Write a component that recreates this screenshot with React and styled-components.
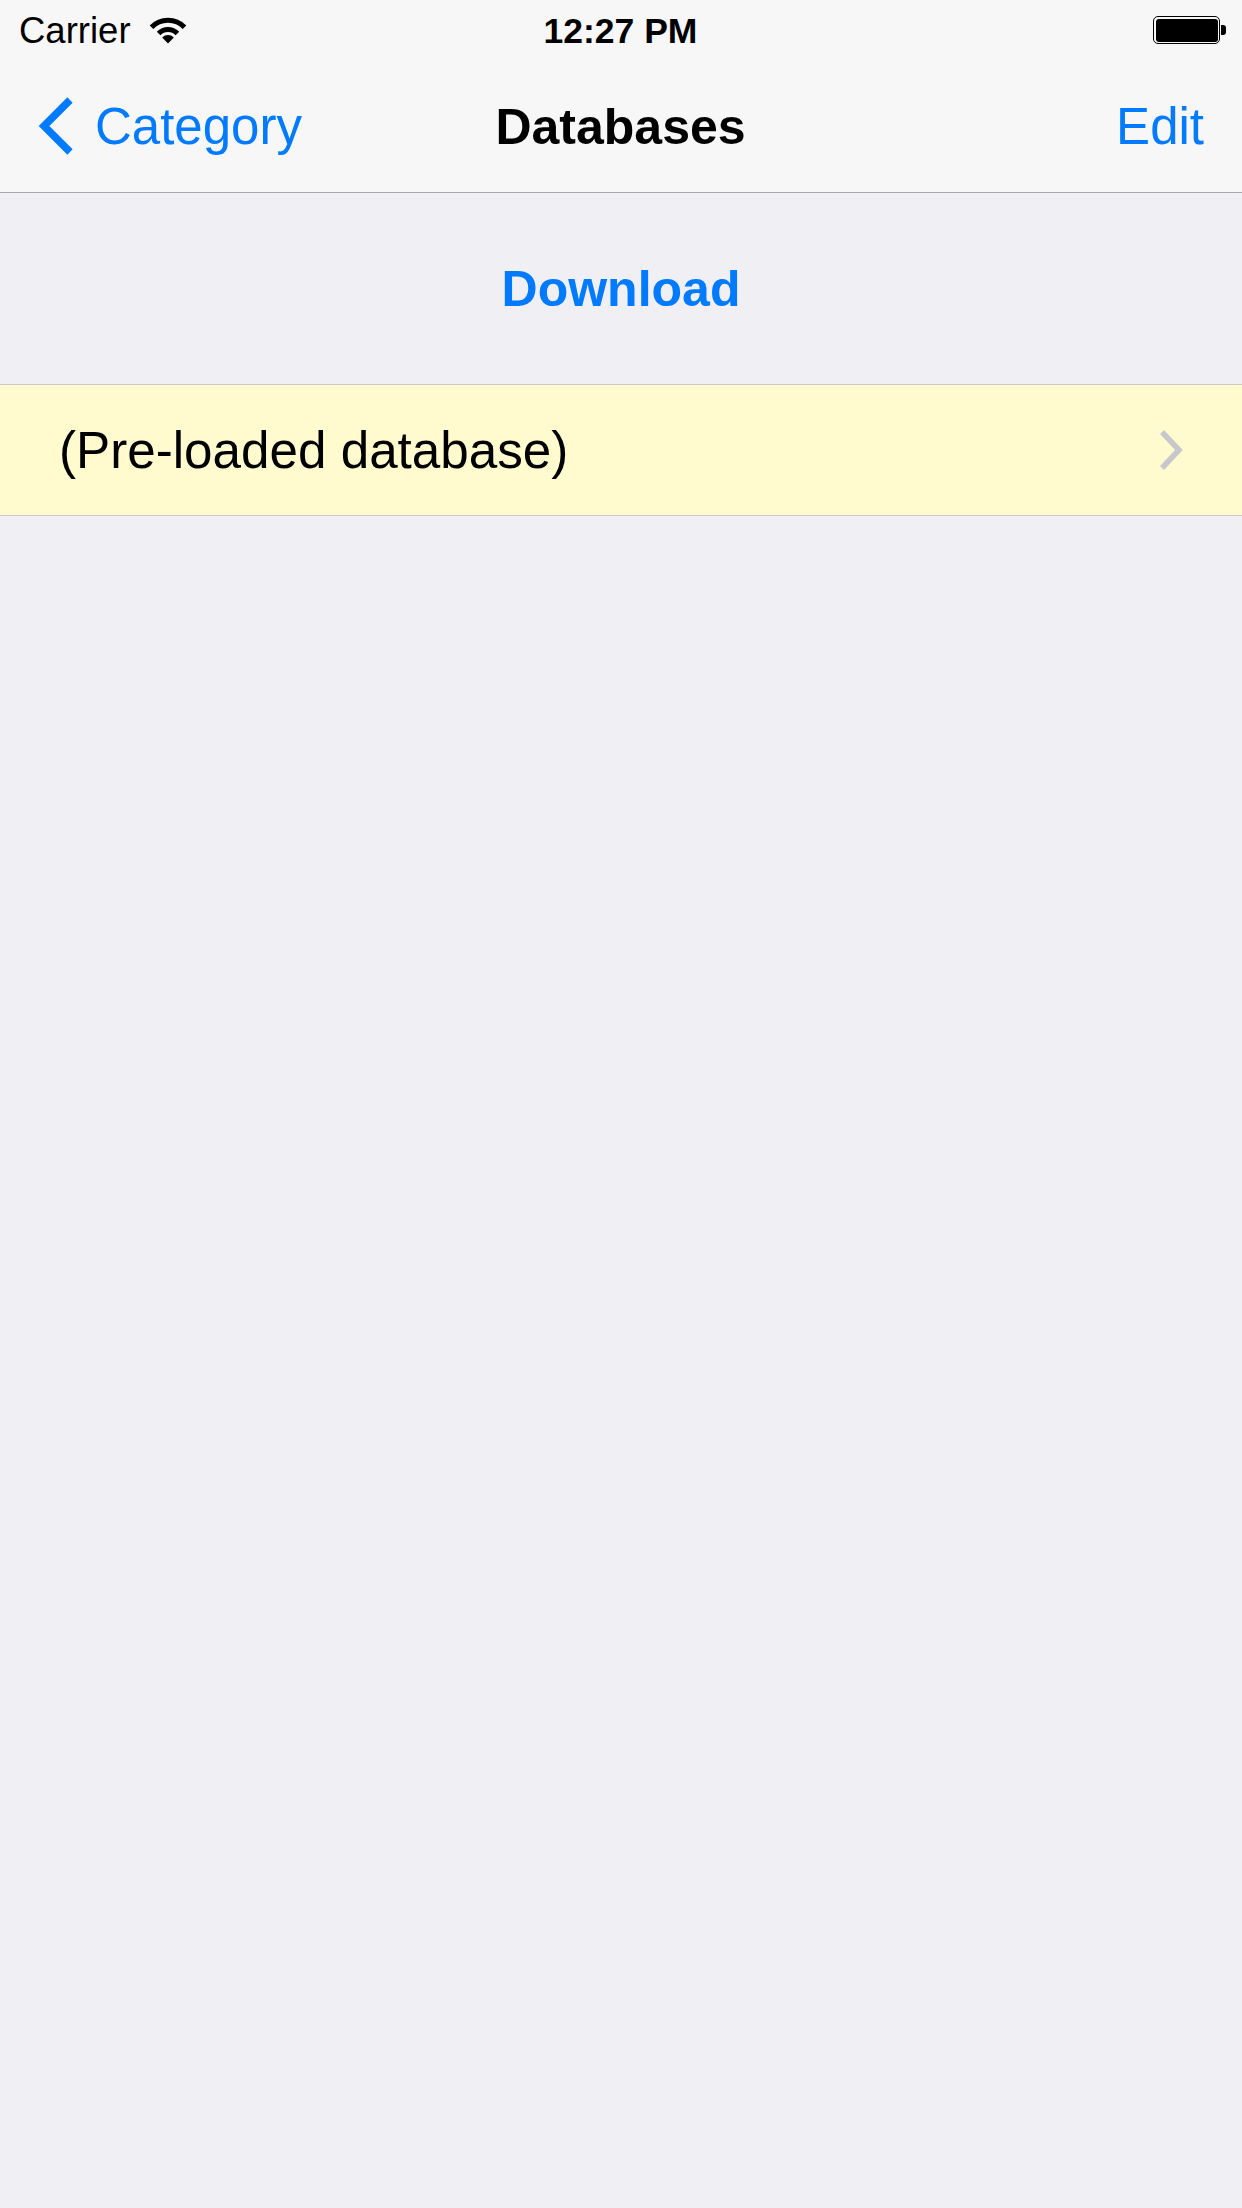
import styled, { createGlobalStyle } from 'styled-components';

const GlobalStyle = createGlobalStyle`
  html, body {
    margin: 0;
    padding: 0;
    background: #efeff4;
  }
  body {
    font-family: "Liberation Sans", Arial, sans-serif;
    -webkit-font-smoothing: antialiased;
  }
`;

export default function App() {
  return (
    <Screen>
      <GlobalStyle />
      <TopBar>
        <StatusBar>
          <StatusLeft>
            <span>Carrier</span>
            <WifiIcon />
          </StatusLeft>
          <Clock>12:27 PM</Clock>
          <StatusRight>
            <Battery>
              <BatteryFill />
            </Battery>
            <BatteryNub />
          </StatusRight>
        </StatusBar>
        <NavBar>
          <BackButton>
            <svg width="38" height="62" viewBox="0 0 38 62">
              <path
                d="M33 5 L7 31 L33 57"
                fill="none"
                stroke="#007aff"
                strokeWidth="7.5"
                strokeLinecap="butt"
                strokeLinejoin="miter"
              />
            </svg>
            <span>Category</span>
          </BackButton>
          <Title>Databases</Title>
          <EditButton>Edit</EditButton>
        </NavBar>
      </TopBar>
      <DownloadSection>
        <DownloadLink>Download</DownloadLink>
      </DownloadSection>
      <List>
        <Row>
          <RowLabel>(Pre-loaded database)</RowLabel>
          <svg width="24" height="40" viewBox="0 0 24 40">
            <path
              d="M3 2 L20 20 L3 38"
              fill="none"
              stroke="#c7c7cc"
              strokeWidth="5.5"
            />
          </svg>
        </Row>
      </List>
    </Screen>
  );
}

function WifiIcon() {
  return (
    <svg width="38" height="27" viewBox="0 0 38 27">
      <path
        d="M2.5 10.2 A23 23 0 0 1 35.5 10.2"
        fill="none"
        stroke="#000"
        strokeWidth="5"
      />
      <path
        d="M9.6 16.6 A13 13 0 0 1 28.4 16.6"
        fill="none"
        stroke="#000"
        strokeWidth="5"
      />
      <path d="M19 26.5 L13.2 20.6 A8 8 0 0 1 24.8 20.6 Z" fill="#000" />
    </svg>
  );
}

const Screen = styled.div`
  min-height: 2208px;
  background: #efeff4;
  display: flex;
  flex-direction: column;
`;

const TopBar = styled.div`
  background: #f7f7f7;
  border-bottom: 1px solid #a7a7aa;
`;

const StatusBar = styled.div`
  height: 60px;
  box-sizing: border-box;
  padding: 2px 16px 0 19px;
  display: grid;
  grid-template-columns: 1fr auto 1fr;
  align-items: center;
  color: #000;
`;

const StatusLeft = styled.div`
  display: flex;
  align-items: center;
  gap: 18px;
  font-size: 36.5px;
  line-height: 58px;
  svg {
    margin-top: -2px;
  }
`;

const Clock = styled.div`
  font-size: 35.5px;
  font-weight: 700;
  line-height: 58px;
  margin-right: 4px;
`;

const StatusRight = styled.div`
  display: flex;
  justify-content: flex-end;
  align-items: center;
  margin-top: -2px;
`;

const Battery = styled.div`
  width: 67px;
  height: 28px;
  box-sizing: border-box;
  border: 1.5px solid #000;
  border-radius: 5px;
  padding: 1.5px;
  display: flex;
`;

const BatteryFill = styled.div`
  flex: 1;
  background: #000;
  border-radius: 3px;
`;

const BatteryNub = styled.div`
  width: 5px;
  height: 10px;
  background: #000;
  border-radius: 0 3px 3px 0;
  margin-left: 1px;
`;

const NavBar = styled.div`
  height: 132px;
  box-sizing: border-box;
  padding: 2px 38px 0 37px;
  display: grid;
  grid-template-columns: 1fr auto 1fr;
  align-items: center;
  font-size: 51px;
  line-height: 130px;
`;

const BackButton = styled.div`
  display: flex;
  align-items: center;
  gap: 20px;
  color: #007aff;
  svg {
    flex: none;
    margin-top: -2px;
  }
`;

const Title = styled.div`
  font-weight: 700;
  font-size: 50px;
  color: #000;
`;

const EditButton = styled.div`
  justify-self: end;
  color: #007aff;
`;

const DownloadSection = styled.div`
  height: 191px;
  display: flex;
  justify-content: center;
  align-items: center;
`;

const DownloadLink = styled.div`
  color: #007aff;
  font-weight: 700;
  font-size: 50px;
  line-height: 191px;
  padding-top: 2px;
`;

const List = styled.div`
  border-top: 1px solid #c8c7cc;
  border-bottom: 1px solid #c8c7cc;
  background: #fffbcf;
`;

const Row = styled.div`
  height: 130px;
  display: flex;
  align-items: center;
  justify-content: space-between;
  padding: 0 59px 0 59px;
`;

const RowLabel = styled.div`
  font-size: 51.2px;
  line-height: 130px;
  padding-top: 2px;
  color: #000;
`;
